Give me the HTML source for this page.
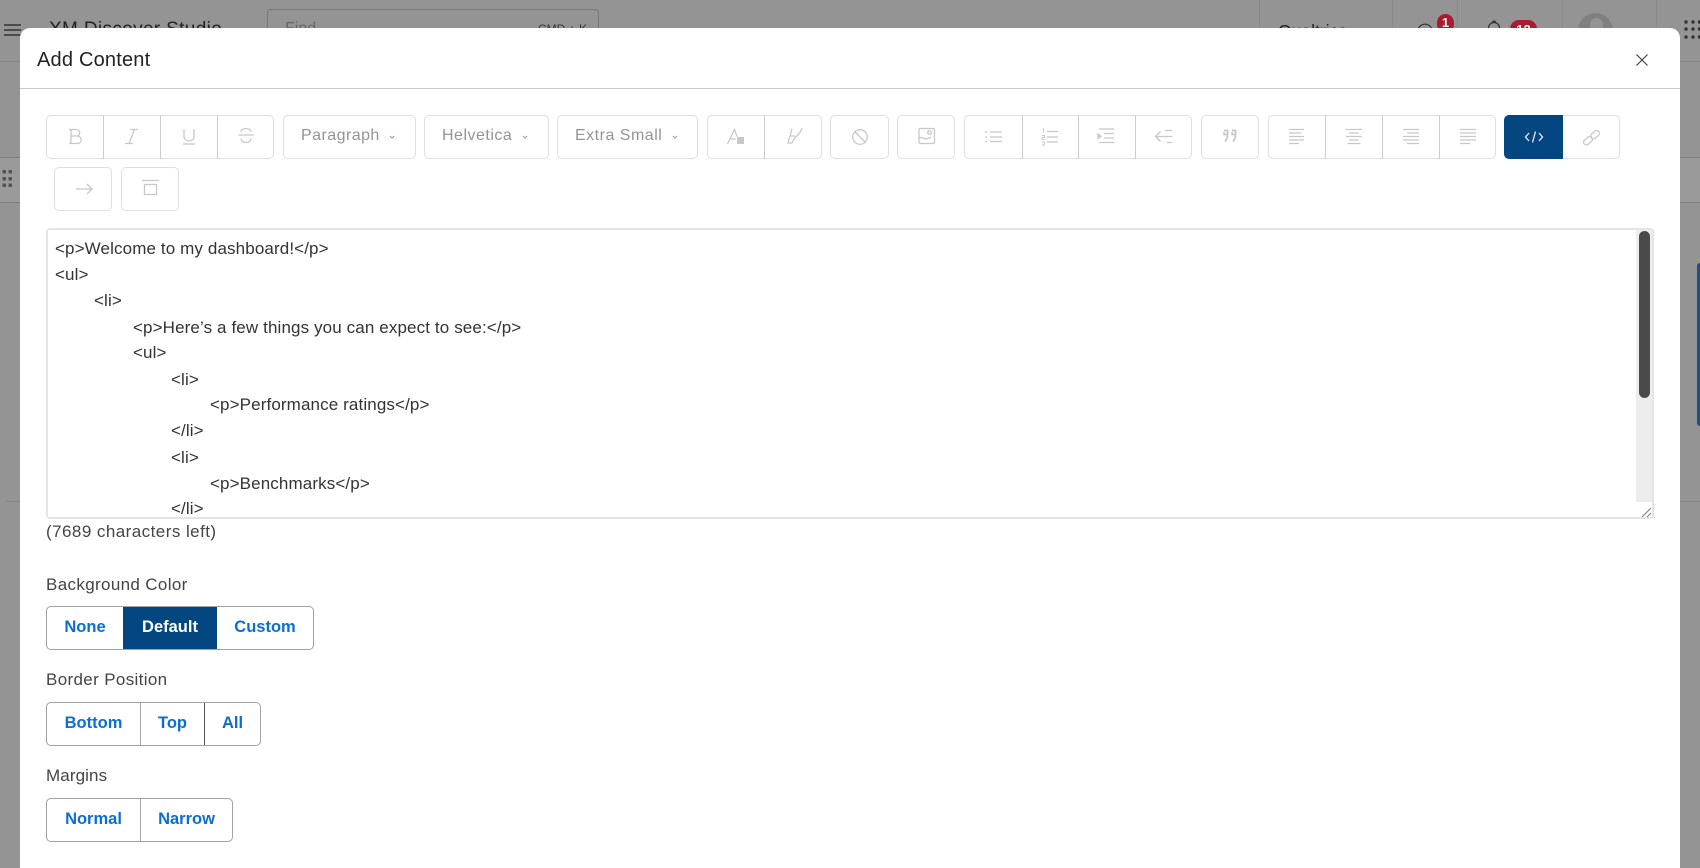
<!DOCTYPE html>
<html><head><meta charset="utf-8"><style>
html,body{margin:0;padding:0;width:1700px;height:850px;overflow:hidden;background:#949494;font-family:"Liberation Sans",sans-serif}
.a{position:absolute}
.hl{position:absolute;height:1px;background:#848484}
.vl{position:absolute;width:1px;top:0;height:61px;background:#8a8a8a}
#modal{position:absolute;left:20px;top:28px;width:1660px;height:840px;background:#fff;border-radius:10px 10px 0 0}
.g{position:absolute;box-sizing:border-box;border:1px solid #dfdfdf;border-radius:5px;height:44px;top:115px;background:#fff}
.d{position:absolute;width:1px;background:#cccccc;top:115px;height:44px}
.dd{position:absolute;top:115px;height:44px;box-sizing:border-box;border:1px solid #dfdfdf;border-radius:5px;color:#949494;font-size:16px;line-height:39px;padding-left:17px;background:#fff}
.dd svg{position:absolute;top:17px}
svg.i{position:absolute;fill:none;stroke:#c8c8c8;stroke-width:1.3}
.code{position:absolute;left:55px;color:#333;font-size:17px;letter-spacing:.12px;line-height:26px;height:26px;white-space:pre}
.lab{position:absolute;left:46px;color:#444;font-size:17px;line-height:20px;letter-spacing:.35px}
.bg{position:absolute;box-sizing:border-box;left:46px;height:44px;border:1px solid #a2a2a2;border-radius:5px;background:#fff;overflow:hidden}
.b{position:absolute;top:0;height:42px;line-height:41px;text-align:center;color:#0b6ed0;font-size:16.5px;font-weight:bold}
</style></head><body>
<!-- background page -->
<div class="hl" style="left:0;top:61px;width:1700px"></div>
<div class="hl" style="left:0;top:157px;width:20px;background:#7c7c7c"></div>
<div class="hl" style="left:0;top:202px;width:20px;background:#7c7c7c"></div>
<div class="a" style="left:0;top:158px;width:20px;height:44px;background:#9a9a9a"></div>
<div class="hl" style="left:1680px;top:157px;width:20px;background:#7c7c7c"></div>
<div class="hl" style="left:1680px;top:202px;width:20px;background:#7c7c7c"></div>
<div class="a" style="left:1680px;top:158px;width:20px;height:44px;background:#9a9a9a"></div>
<div class="hl" style="left:6px;top:501px;width:14px"></div>
<div class="hl" style="left:1680px;top:501px;width:20px"></div>
<div class="a" style="left:1697px;top:263px;width:3px;height:163px;background:#1f4f85;border-radius:3px 0 0 3px"></div>
<svg class="a" style="left:0;top:0" width="24" height="40"><path d="M4 25h17M4 30h17M4 35h17" stroke="#333" stroke-width="1.6"/></svg>
<div class="a" style="left:49px;top:19px;font-size:19px;color:#222;line-height:22px;letter-spacing:.35px;white-space:pre">XM Discover Studio</div>
<div class="a" style="left:267px;top:9px;width:332px;height:40px;box-sizing:border-box;border:1px solid #777;border-radius:4px"></div>
<div class="a" style="left:285px;top:19px;font-size:16px;color:#666;line-height:20px">Find</div>
<div class="a" style="left:538px;top:22px;font-size:12px;color:#333;line-height:14px;white-space:pre">CMD + K</div>
<div class="vl" style="left:1259px"></div><div class="vl" style="left:1392px"></div><div class="vl" style="left:1457px"></div><div class="vl" style="left:1562px"></div><div class="vl" style="left:1656px"></div>
<div class="a" style="left:1278px;top:20px;font-size:17.5px;color:#222;line-height:22px;white-space:pre">Qualtrics</div>
<svg class="a" style="left:1415px;top:20px" width="22" height="14"><circle cx="10" cy="11.500" r="7.300" fill="none" stroke="#333" stroke-width="1.2"/></svg>
<div class="a" style="left:1437px;top:14px;width:17px;height:19px;background:#a81c30;border-radius:9px;color:#eee;font-size:13px;font-weight:bold;text-align:center;line-height:18px">1</div>
<svg class="a" style="left:1485px;top:19px" width="20" height="12"><path d="M3.500 12V9a5.500 5.500 0 0 1 11 0v3M7.500 3.500a1.500 1.500 0 0 1 3 0" fill="none" stroke="#333" stroke-width="1.2"/></svg>
<div class="a" style="left:1510px;top:20px;width:27px;height:18px;background:#a81c30;border-radius:9px;color:#eee;font-size:13px;font-weight:bold;text-align:center;line-height:20px">12</div>
<div class="a" style="left:1578px;top:13px;width:35px;height:35px;background:#808080;border-radius:50%"></div>
<div class="a" style="left:1590px;top:18px;width:13px;height:14px;background:#949494;border-radius:50%"></div>
<svg class="a" style="left:1680px;top:18px" width="20" height="24" fill="#333"><circle cx="6" cy="4" r="1.700"/><circle cx="13" cy="4" r="1.700"/><circle cx="19.500" cy="4" r="1.700"/><circle cx="6" cy="11" r="1.700"/><circle cx="13" cy="11" r="1.700"/><circle cx="19.500" cy="11" r="1.700"/><circle cx="6" cy="19" r="1.700"/><circle cx="13" cy="19" r="1.700"/><circle cx="19.500" cy="19" r="1.700"/></svg>
<svg class="a" style="left:0;top:167px" width="20" height="24" fill="#555"><rect x="2.500" y="3" width="3.500" height="3.500"/><rect x="8.500" y="3" width="3.500" height="3.500"/><rect x="2.500" y="10" width="3.500" height="3.500"/><rect x="8.500" y="10" width="3.500" height="3.500"/><rect x="2.500" y="16.500" width="3.500" height="3.500"/><rect x="8.500" y="16.500" width="3.500" height="3.500"/></svg>

<div id="modal"></div>
<div class="a" style="left:37px;top:49px;font-size:20px;line-height:23px;color:#222;letter-spacing:.2px">Add Content</div>
<svg class="a" style="left:1634px;top:52px" width="16" height="16"><path d="M2.500 2.500l11 11M13.500 2.500l-11 11" stroke="#444" stroke-width="1.200"/></svg>
<div class="a" style="left:20px;top:88px;width:1660px;height:1px;background:#c8c8c8"></div>

<!-- toolbar -->
<div class="g" style="left:46px;width:228px"></div>
<div class="d" style="left:103px"></div><div class="d" style="left:160px"></div><div class="d" style="left:217px"></div>
<svg class="i" style="left:66px;top:126px" width="18" height="20"><path d="M3 3.500h8a3.300 3.300 0 0 1 0 6.500H5M5 10h6.500a3.700 3.700 0 0 1 0 7.500H3M5 3.500v14"/></svg>
<svg class="i" style="left:123px;top:126px" width="18" height="20"><path d="M7 3.500h8M2 17.500h8M11.500 3.500L6 17.500"/></svg>
<svg class="i" style="left:180px;top:126px" width="18" height="22"><path d="M4 3v7.500a5 4.500 0 0 0 10 0V3M3 18h12"/></svg>
<svg class="i" style="left:237px;top:125px" width="18" height="22"><path d="M1.500 10h15M14 7a5 3.500 0 0 0-10 0M4 13.500a5 4 0 0 0 10 0"/></svg>
<div class="dd" style="left:283px;width:133px;letter-spacing:.45px">Paragraph<svg width="10" height="8" style="left:103px"><path d="M3 3L5 5l2-2" fill="none" stroke="#999" stroke-width="1"/></svg></div>
<div class="dd" style="left:424px;width:125px;letter-spacing:.5px">Helvetica<svg width="10" height="8" style="left:95px"><path d="M3 3L5 5l2-2" fill="none" stroke="#999" stroke-width="1"/></svg></div>
<div class="dd" style="left:557px;width:141px;letter-spacing:.5px">Extra Small<svg width="10" height="8" style="left:112px"><path d="M3 3L5 5l2-2" fill="none" stroke="#999" stroke-width="1"/></svg></div>
<div class="g" style="left:707px;width:115px"></div><div class="d" style="left:764px"></div>
<svg class="i" style="left:726px;top:127px" width="20" height="20"><path d="M1.500 17L8.500 2.500l2.500 7M4 12h6"/><rect x="11" y="10" width="7" height="7" fill="#c8c8c8" stroke="none"/></svg>
<svg class="i" style="left:785px;top:126px" width="20" height="22"><path d="M17 2c-1 5-5 7-8 11M7 2.500L5 10M5 10h5M5 10l-2 7h4l2-4"/></svg>
<div class="g" style="left:830px;width:59px"></div>
<svg class="i" style="left:851px;top:128px" width="18" height="18" stroke-width="1.500"><circle cx="9" cy="9" r="7.300"/><path d="M4 4l10 10"/></svg>
<div class="g" style="left:897px;width:58px"></div>
<svg class="i" style="left:918px;top:127px" width="18" height="18"><rect x="1" y="1.500" width="15.500" height="15" rx="1.500"/><circle cx="11.500" cy="5.500" r="1.800"/><path d="M1 11c3-2 4 1 6.500 1s3-2 5.500-1"/></svg>
<div class="g" style="left:964px;width:228px"></div>
<div class="d" style="left:1022px"></div><div class="d" style="left:1078px"></div><div class="d" style="left:1135px"></div>
<svg class="i" style="left:984px;top:129px" width="18" height="16"><path d="M6 3h12M6 8h12M6 12.500h12"/><path d="M1 3h2M1 8h2M1 12.500h2"/></svg>
<svg class="i" style="left:1041px;top:127px" width="18" height="20"><path d="M6 4.500h11M6 10h11M6 15h11"/><path d="M2.500 1.500v4M1 8.500h2.500v2H1v2h2.500M1 15h2.500v3H1" stroke-width=".9"/></svg>
<svg class="i" style="left:1097px;top:127px" width="18" height="18"><path d="M2 2h15M7 6.500h10M7 11h10M2 15.500h15"/><path d="M1 7l3 2.300-3 2.300z" fill="#c8c8c8"/></svg>
<svg class="i" style="left:1154px;top:128px" width="20" height="18"><path d="M1.500 8.500h17M6.500 3.500L1.500 8.500l5 5M11 2.500h7M13 14.500h5"/></svg>
<div class="g" style="left:1201px;width:58px"></div>
<svg class="a" style="left:1222px;top:129px" width="16" height="15" fill="none" stroke="#c4c4c4" stroke-width="1.700"><path d="M2 1.500h3.500V6c0 3-1 5-2.500 6.500M10 1.500h3.500V6c0 3-1 5-2.500 6.500"/><path d="M2 3v2.500h3M10 3v2.500h3" stroke-width="1.500"/></svg>
<div class="g" style="left:1268px;width:228px"></div>
<div class="d" style="left:1325px"></div><div class="d" style="left:1382px"></div><div class="d" style="left:1439px"></div>
<svg class="i" style="left:1288px;top:128px" width="18" height="18"><path d="M1 1.500h15M1 5h12M1 8.500h15M1 12h15M1 15.500h10"/></svg>
<svg class="i" style="left:1345px;top:128px" width="18" height="18"><path d="M1 1.500h16M4 5h10M1 8.500h16M4 12h10M2.500 15.500h13"/></svg>
<svg class="i" style="left:1402px;top:128px" width="18" height="18"><path d="M1 1.500h16M5 5h12M1 8.500h16M1 12h16M5 15.500h12"/></svg>
<svg class="i" style="left:1459px;top:128px" width="18" height="18"><path d="M1 1.500h16M1 5h16M1 8.500h16M1 12h16M1 15.500h10"/></svg>
<div class="a" style="left:1504px;top:115px;width:59px;height:44px;background:#034680;border-radius:5px 0 0 5px"></div>
<svg class="a" style="left:1524px;top:130px" width="20" height="15" fill="none" stroke="#e8eef4" stroke-width="1.300"><path d="M5 3L1.500 7 5 11M15 3L18.500 7 15 11M11.500 1.500L8.500 12.500"/></svg>
<div class="g" style="left:1563px;width:57px;border-left:0;border-radius:0 5px 5px 0"></div>
<svg class="i" style="left:1582px;top:129px" width="20" height="18"><rect x="1" y="9" width="10" height="5.500" rx="2.700" transform="rotate(-42 6 11.700)"/><rect x="8" y="3" width="10" height="5.500" rx="2.700" transform="rotate(-42 13 5.700)"/></svg>
<div class="g" style="left:54px;top:167px;width:58px"></div>
<svg class="i" style="left:75px;top:180px" width="20" height="18"><path d="M1 9h16M12 4l5 5-5 5"/></svg>
<div class="g" style="left:121px;top:167px;width:58px"></div>
<svg class="i" style="left:141px;top:179px" width="20" height="20"><path d="M1 1.500h17"/><rect x="3.500" y="5.500" width="12" height="10"/></svg>

<!-- textarea -->
<div class="a" style="left:46px;top:228px;width:1608px;height:291px;box-sizing:border-box;border:2px solid #e4e4e4;border-radius:4px;background:#fff"></div>
<div class="a" style="left:1636px;top:230px;width:16px;height:272px;background:#ededed"></div>
<div class="a" style="left:1638.500px;top:231px;width:11.500px;height:167px;background:#4a4a4a;border-radius:6px"></div>
<svg class="a" style="left:1641px;top:507px" width="11" height="11"><path d="M1 10l9-9M6 10l4-4" stroke="#777" stroke-width="1"/></svg>
<div class="code" style="top:236px">&lt;p&gt;Welcome to my dashboard!&lt;/p&gt;</div>
<div class="code" style="top:262px">&lt;ul&gt;</div>
<div class="code" style="top:288px;left:94px">&lt;li&gt;</div>
<div class="code" style="top:314.500px;left:133px">&lt;p&gt;Here’s a few things you can expect to see:&lt;/p&gt;</div>
<div class="code" style="top:340px;left:133px">&lt;ul&gt;</div>
<div class="code" style="top:367px;left:171px">&lt;li&gt;</div>
<div class="code" style="top:392px;left:210px">&lt;p&gt;Performance ratings&lt;/p&gt;</div>
<div class="code" style="top:418px;left:171px">&lt;/li&gt;</div>
<div class="code" style="top:445px;left:171px">&lt;li&gt;</div>
<div class="code" style="top:471px;left:210px">&lt;p&gt;Benchmarks&lt;/p&gt;</div>
<div class="a" style="left:47px;top:496px;width:1588px;height:22px;overflow:hidden"><div class="code" style="top:0;left:124px">&lt;/li&gt;</div></div>
<div class="a" style="left:46px;top:522px;font-size:17px;letter-spacing:.45px;line-height:20px;color:#444;white-space:pre">(7689 characters left)</div>

<div class="lab" style="top:575px">Background Color</div>
<div class="bg" style="top:606px;width:268px">
  <div class="b" style="left:0;width:76px">None</div>
  <div class="b" style="left:76px;width:94px;background:#034680;color:#fff">Default</div>
  <div class="b" style="left:170px;width:96px">Custom</div>
</div>
<div class="lab" style="top:670px">Border Position</div>
<div class="bg" style="top:702px;width:215px">
  <div class="b" style="left:0;width:93px;border-right:1px solid #a6a6a6">Bottom</div>
  <div class="b" style="left:94px;width:63px;border-right:1px solid #555">Top</div>
  <div class="b" style="left:158px;width:55px">All</div>
</div>
<div class="lab" style="top:766px;letter-spacing:.1px">Margins</div>
<div class="bg" style="top:798px;width:187px">
  <div class="b" style="left:0;width:93px;border-right:1px solid #a6a6a6">Normal</div>
  <div class="b" style="left:94px;width:91px">Narrow</div>
</div>
</body></html>
